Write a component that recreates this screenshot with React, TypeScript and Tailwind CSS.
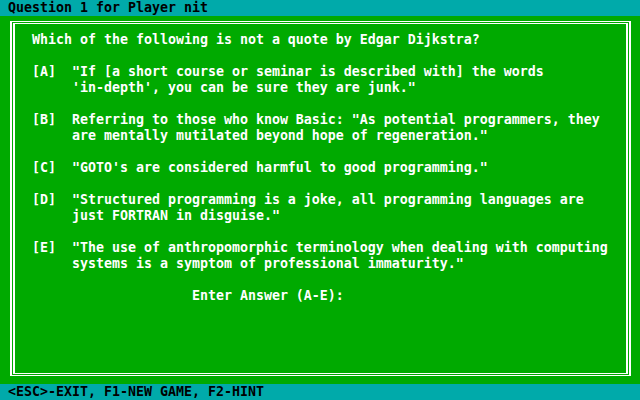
import React from 'react';

const lines = [
  'Which of the following is not a quote by Edgar Dijkstra?',
  '',
  '[A]  "If [a short course or seminar is described with] the words',
  "     'in-depth', you can be sure they are junk.\"",
  '',
  '[B]  Referring to those who know Basic: "As potential programmers, they',
  '     are mentally mutilated beyond hope of regeneration."',
  '',
  '[C]  "GOTO\'s are considered harmful to good programming."',
  '',
  '[D]  "Structured programming is a joke, all programming languages are',
  '     just FORTRAN in disguise."',
  '',
  '[E]  "The use of anthropomorphic terminology when dealing with computing',
  '     systems is a symptom of professional immaturity."',
  '',
  '                    Enter Answer (A-E):',
];

export default function App() {
  return (
    <div className="w-[640px] h-[400px] overflow-hidden bg-[#00aa00] font-['DejaVu_Sans_Mono',monospace] font-bold text-[13.29px] leading-4 whitespace-pre">
      <div className="h-4 bg-[#00aaaa] text-black pl-2">Question 1 for Player nit</div>

      <div className="h-[368px] pt-[5px] pl-[10px]">
        <div className="w-[621px] h-[355px] border-x-2 border-y border-white p-px">
          <div className="h-full border-x-2 border-y border-white pt-2 pl-[17px] text-white">
            {lines.map((line, i) => (
              <div key={i} className="h-4">{line}</div>
            ))}
          </div>
        </div>
      </div>

      <div className="h-4 bg-[#00aaaa] text-black pl-2">{'<ESC>-EXIT, F1-NEW GAME, F2-HINT'}</div>
    </div>
  );
}
